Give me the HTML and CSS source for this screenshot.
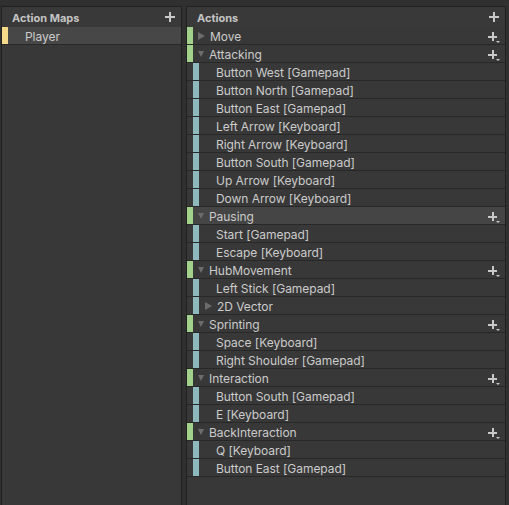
FILE: index.html
```html
<!DOCTYPE html>
<html>
<head>
<meta charset="utf-8">
<link rel="stylesheet" href="styles.css">
</head>
<body>
<div class="window">
  <section class="panel maps">
    <div class="header"><span class="title">Action Maps</span>
      <svg class="plus" width="10" height="10" viewBox="0 0 10 10"><rect x="4" y="0" width="2" height="10"/><rect x="0" y="4" width="10" height="2"/></svg>
    </div>
    <div class="row selected"><span class="bar yellow"></span><span class="label map-label">Player</span></div>
  </section>
  <section class="panel actions">
    <div class="header"><span class="title">Actions</span>
      <svg class="plus" width="10" height="10" viewBox="0 0 10 10"><rect x="4" y="0" width="2" height="10"/><rect x="0" y="4" width="10" height="2"/></svg>
    </div>
    <div class="list">
      <div class="row action"><span class="bar green"></span><span class="tri right"></span><span class="label">Move</span><svg class="addmenu" width="13" height="11" viewBox="0 0 13 11"><rect x="4" y="0" width="2" height="9"/><rect x="0" y="4" width="9" height="2"/><path d="M8 9h4l-2 2z"/></svg></div>
      <div class="row action"><span class="bar green"></span><span class="tri down"></span><span class="label">Attacking</span><svg class="addmenu" width="13" height="11" viewBox="0 0 13 11"><rect x="4" y="0" width="2" height="9"/><rect x="0" y="4" width="9" height="2"/><path d="M8 9h4l-2 2z"/></svg></div>
      <div class="row binding"><span class="spacer"></span><span class="bar blue"></span><span class="label bind">Button West [Gamepad]</span></div>
      <div class="row binding"><span class="spacer"></span><span class="bar blue"></span><span class="label bind">Button North [Gamepad]</span></div>
      <div class="row binding"><span class="spacer"></span><span class="bar blue"></span><span class="label bind">Button East [Gamepad]</span></div>
      <div class="row binding"><span class="spacer"></span><span class="bar blue"></span><span class="label bind">Left Arrow [Keyboard]</span></div>
      <div class="row binding"><span class="spacer"></span><span class="bar blue"></span><span class="label bind">Right Arrow [Keyboard]</span></div>
      <div class="row binding"><span class="spacer"></span><span class="bar blue"></span><span class="label bind">Button South [Gamepad]</span></div>
      <div class="row binding"><span class="spacer"></span><span class="bar blue"></span><span class="label bind">Up Arrow [Keyboard]</span></div>
      <div class="row binding"><span class="spacer"></span><span class="bar blue"></span><span class="label bind">Down Arrow [Keyboard]</span></div>
      <div class="row action hover"><span class="bar green"></span><span class="tri down"></span><span class="label">Pausing</span><svg class="addmenu" width="13" height="11" viewBox="0 0 13 11"><rect x="4" y="0" width="2" height="9"/><rect x="0" y="4" width="9" height="2"/><path d="M8 9h4l-2 2z"/></svg></div>
      <div class="row binding"><span class="spacer"></span><span class="bar blue"></span><span class="label bind">Start [Gamepad]</span></div>
      <div class="row binding"><span class="spacer"></span><span class="bar blue"></span><span class="label bind">Escape [Keyboard]</span></div>
      <div class="row action"><span class="bar green"></span><span class="tri down"></span><span class="label">HubMovement</span><svg class="addmenu" width="13" height="11" viewBox="0 0 13 11"><rect x="4" y="0" width="2" height="9"/><rect x="0" y="4" width="9" height="2"/><path d="M8 9h4l-2 2z"/></svg></div>
      <div class="row binding"><span class="spacer"></span><span class="bar blue"></span><span class="label bind">Left Stick [Gamepad]</span></div>
      <div class="row binding"><span class="spacer"></span><span class="bar blue"></span><span class="tri right sub"></span><span class="label">2D Vector</span></div>
      <div class="row action"><span class="bar green"></span><span class="tri down"></span><span class="label">Sprinting</span><svg class="addmenu" width="13" height="11" viewBox="0 0 13 11"><rect x="4" y="0" width="2" height="9"/><rect x="0" y="4" width="9" height="2"/><path d="M8 9h4l-2 2z"/></svg></div>
      <div class="row binding"><span class="spacer"></span><span class="bar blue"></span><span class="label bind">Space [Keyboard]</span></div>
      <div class="row binding"><span class="spacer"></span><span class="bar blue"></span><span class="label bind">Right Shoulder [Gamepad]</span></div>
      <div class="row action"><span class="bar green"></span><span class="tri down"></span><span class="label">Interaction</span><svg class="addmenu" width="13" height="11" viewBox="0 0 13 11"><rect x="4" y="0" width="2" height="9"/><rect x="0" y="4" width="9" height="2"/><path d="M8 9h4l-2 2z"/></svg></div>
      <div class="row binding"><span class="spacer"></span><span class="bar blue"></span><span class="label bind">Button South [Gamepad]</span></div>
      <div class="row binding"><span class="spacer"></span><span class="bar blue"></span><span class="label bind">E [Keyboard]</span></div>
      <div class="row action"><span class="bar green"></span><span class="tri down"></span><span class="label">BackInteraction</span><svg class="addmenu" width="13" height="11" viewBox="0 0 13 11"><rect x="4" y="0" width="2" height="9"/><rect x="0" y="4" width="9" height="2"/><path d="M8 9h4l-2 2z"/></svg></div>
      <div class="row binding"><span class="spacer"></span><span class="bar blue"></span><span class="label bind">Q [Keyboard]</span></div>
      <div class="row binding"><span class="spacer"></span><span class="bar blue"></span><span class="label bind">Button East [Gamepad]</span></div>
    </div>
  </section>
</div>
</body>
</html>
```

FILE: styles.css
```css
html, body {
  margin: 0;
  padding: 0;
  background: #303030;
  height: 505px;
  overflow: hidden;
  font-family: Inter, "Noto Sans", sans-serif;
}
.window {
  display: flex;
  padding: 6px 0 0 1px;
  height: 499px;
  gap: 4px;
}
.panel {
  background: #383838;
  border: 1px solid #212121;
  border-bottom: none;
  display: flex;
  flex-direction: column;
}
.maps { width: 179px; }
.actions { width: 318px; }
.header {
  height: 20px;
  display: flex;
  align-items: center;
  justify-content: space-between;
  padding: 0 6px 0 10px;
  background: #393939;
}
.title {
  font-size: 11px;
  font-weight: 700;
  color: #c4c4c4;
  padding-top: 1px;
}
.plus { fill: #c8c8c8; }
.row {
  height: 17px;
  border-bottom: 1px solid #282828;
  display: flex;
  align-items: center;
  font-size: 12px;
  color: #cbcbcb;
}
.row.selected { background: #474747; }
.row.hover { background: #454545; }
.bar {
  width: 6px;
  height: 17px;
  flex: none;
}
.yellow { background: #f5d98b; }
.green { background: #a2d18c; }
.blue { background: #8db8bc; }
.spacer { width: 6px; flex: none; }
.tri {
  width: 0;
  height: 0;
  flex: none;
}
.tri.right {
  border-top: 4px solid transparent;
  border-bottom: 4px solid transparent;
  border-left: 7px solid #6c6c6c;
  margin-left: 5px;
}
.tri.down {
  border-left: 3.5px solid transparent;
  border-right: 3.5px solid transparent;
  border-top: 6px solid #6c6c6c;
  margin-left: 5px;
  margin-top: 1px;
}
.tri.sub { margin-left: 6px; }
.label {
  margin-left: 5px;
  padding-top: 2px;
  white-space: nowrap;
  letter-spacing: -0.05px;
}
.row .label.bind { margin-left: 17px; }
.row .label.map-label { margin-left: 17px; }
.addmenu {
  fill: #c8c8c8;
  margin-left: auto;
  margin-right: 4px;
  margin-top: 3px;
}
```
